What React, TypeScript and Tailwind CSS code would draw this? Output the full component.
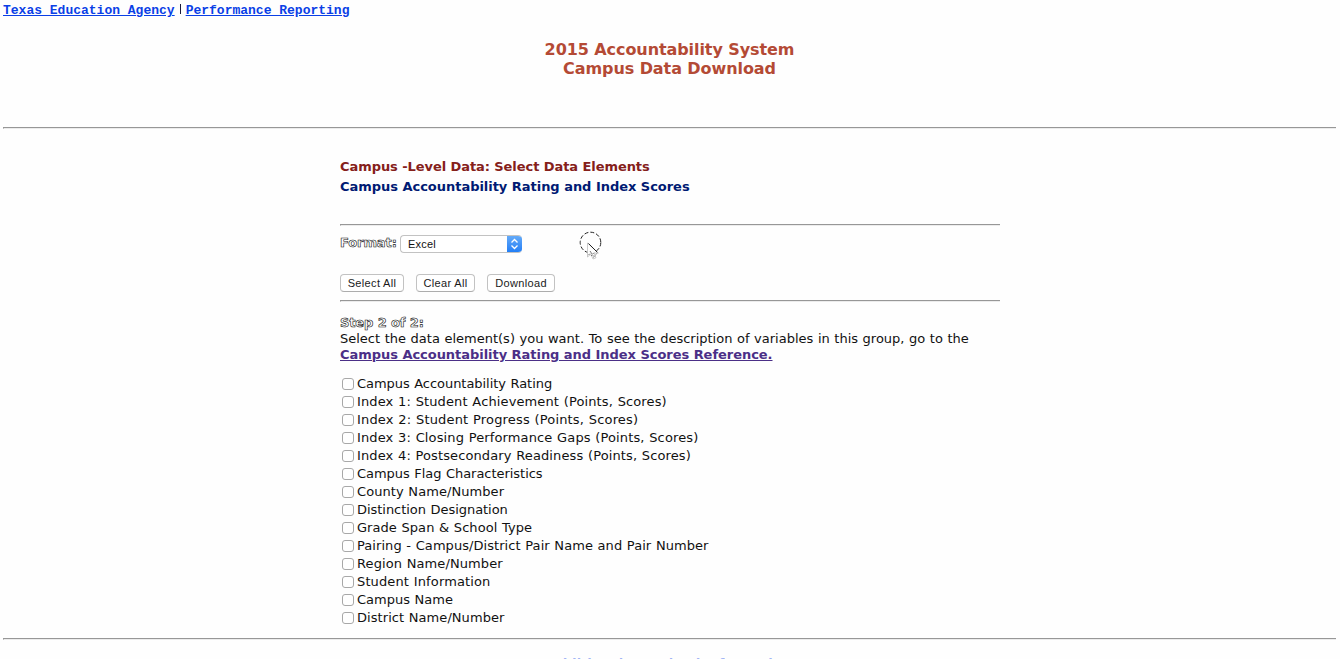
import React from 'react';

const elements = [
  { label: 'Campus Accountability Rating', tracking: 'tracking-[-0.045px]' },
  { label: 'Index 1: Student Achievement (Points, Scores)', tracking: 'tracking-[0.12px]' },
  { label: 'Index 2: Student Progress (Points, Scores)', tracking: 'tracking-[0.16px]' },
  { label: 'Index 3: Closing Performance Gaps (Points, Scores)', tracking: 'tracking-[0.12px]' },
  { label: 'Index 4: Postsecondary Readiness (Points, Scores)', tracking: 'tracking-[0.11px]' },
  { label: 'Campus Flag Characteristics', tracking: 'tracking-[-0.04px]' },
  { label: 'County Name/Number', tracking: 'tracking-[0.07px]' },
  { label: 'Distinction Designation', tracking: 'tracking-[-0.04px]' },
  { label: 'Grade Span & School Type', tracking: 'tracking-[0.05px]' },
  { label: 'Pairing - Campus/District Pair Name and Pair Number', tracking: 'tracking-[0.06px]' },
  { label: 'Region Name/Number', tracking: 'tracking-[0.09px]' },
  { label: 'Student Information', tracking: 'tracking-[0.13px]' },
  { label: 'Campus Name', tracking: 'tracking-[0px]' },
  { label: 'District Name/Number', tracking: 'tracking-[0.06px]' },
];

function Rule() {
  return <div className="h-[2px] w-full border-t border-l border-b border-t-[#979797] border-l-[#979797] border-b-[#ececec]" />;
}

function PushButton({ label, width }: { label: string; width: string }) {
  return (
    <button
      className={`${width} h-[18px] rounded-[4px] border border-[#c2c2c2] border-b-[#adadad] bg-white text-center font-['Liberation_Sans',sans-serif] text-[11px] leading-[16px] tracking-[0.35px] whitespace-nowrap text-[#1a1a1a]`}
    >
      {label}
    </button>
  );
}

function Pointer() {
  return (
    <svg className="absolute top-[231px] left-[578px]" width="26" height="30" viewBox="0 0 26 30" fill="none">
      <circle cx="12.5" cy="11.5" r="10.3" stroke="#222" strokeWidth="1" strokeDasharray="4 2" />
      <path d="M9.500 12v14l3.300-3 2.200 5 3-1.300-2-4.700h4.400z" fill="#fefefe" stroke="#bbb" strokeWidth="0.8" />
      <path d="M10.500 12.500l8.500 8.500" stroke="#222" />
      <path d="M10.500 24l3-3M13 25l3.500-4M15.500 26.500l4-5M12 20l4 6" stroke="#555" strokeWidth="0.8" strokeDasharray="1.5 1" />
    </svg>
  );
}

export default function App() {
  return (
    <div className="relative h-[659px] w-[1340px] overflow-hidden bg-[#fefefe] pr-1 pl-[3px] font-['DejaVu_Sans',Verdana,sans-serif] text-[13px] text-[#111]">
      <nav className="flex h-[20px] items-start font-['Liberation_Mono',monospace] text-[13px] leading-[22px] font-bold text-[#0a3fe6]">
        <a className="underline underline-offset-1">Texas Education Agency</a>
        <span className="mt-[4px] mr-[5px] ml-[5px] h-[10px] w-px bg-[#1a1a3a]" />
        <a className="underline underline-offset-1">Performance Reporting</a>
      </nav>
      <h1 className="mt-5 h-[87px] text-center text-[16px] leading-[19px] font-bold tracking-[-0.08px] text-[#b44a35]">
        2015 Accountability System
        <br />
        Campus Data Download
      </h1>
      <Rule />
      <main className="ml-[337px] w-[660px]">
        <header className="h-[95px] pt-[28px] text-[13px] leading-[20px] font-bold">
          <h2 className="tracking-[-0.07px] text-[#85201a]">Campus -Level Data: Select Data Elements</h2>
          <h2 className="tracking-[-0.03px] text-[#001a73]">Campus Accountability Rating and Index Scores</h2>
        </header>
        <Rule />
        <div className="flex h-[48px] items-start pt-[9px]">
          <span className="w-[60px] text-[13px] leading-[16px] font-bold tracking-[-0.1px] text-white [-webkit-text-stroke:0.6px_#111]">Format:</span>
          <div className="flex h-[18px] w-[122px] items-center justify-between overflow-hidden rounded-[4px] border border-[#c2c2c2] border-r-0 bg-white pl-[7px] font-['Liberation_Sans',sans-serif] text-[11px] tracking-[0.2px]">
            <span>Excel</span>
            <span className="-my-px flex h-[18px] w-[15px] items-center justify-center bg-linear-to-b from-[#66acf8] to-[#1c7cf6]">
              <svg width="9" height="12" viewBox="0 0 9 12" fill="none" stroke="white" strokeWidth="1.3">
                <path d="M1.500 4.500l3-3 3 3M1.500 7.500l3 3 3-3" />
              </svg>
            </span>
          </div>
        </div>
        <div className="flex h-[26px] gap-3">
          <PushButton label="Select All" width="w-[64px]" />
          <PushButton label="Clear All" width="w-[59px]" />
          <PushButton label="Download" width="w-[68px]" />
        </div>
        <Rule />
        <section className="h-[73px] pt-[13px] text-[13px] leading-[16px] whitespace-nowrap">
          <p className="font-bold tracking-[-0.12px] text-white [-webkit-text-stroke:0.6px_#111]">Step 2 of 2:</p>
          <p className="[word-spacing:0.44px]">
            Select the data element(s) you want. To see the description of variables in this group, go to the
          </p>
          <a className="block font-bold tracking-[-0.04px] text-[#4b2f87] underline underline-offset-1">
            Campus Accountability Rating and Index Scores Reference.
          </a>
        </section>
        <ul>
          {elements.map(({ label, tracking }) => (
            <li key={label} className="flex h-[18px] items-center whitespace-nowrap">
              <span className="mr-[3px] ml-[2px] h-3 w-3 shrink-0 rounded-[3px] border border-[#a8a8a8] bg-white" />
              <span className={`leading-[18px] [word-spacing:0.44px] ${tracking}`}>{label}</span>
            </li>
          ))}
        </ul>
        <div className="h-[11px]" />
      </main>
      <Rule />
      <footer className="pt-[16px] text-center text-[13px] leading-[16px] font-bold text-[#0a3fe6]/40">
        Additional Download Information
      </footer>
      <Pointer />
    </div>
  );
}
